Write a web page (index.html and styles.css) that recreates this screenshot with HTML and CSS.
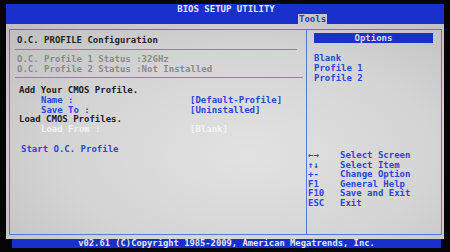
FILE: index.html
```html
<!DOCTYPE html>
<html lang="en">
<head>
    <meta charset="UTF-8">
    <meta name="viewport" content="width=device-width, initial-scale=1.0">
    <title>BIOS Setup Utility</title>
    <link rel="stylesheet" href="styles.css">
</head>
<body>
    <div class="screen">
        <div class="topbar">
            <div class="bar-title">BIOS SETUP UTILITY</div>
            <div class="tabs"><span class="tab active">Tools</span></div>
        </div>
        <div class="main">
            <div class="frame">
                <div class="left">
                    <div class="heading">O.C. PROFILE Configuration</div>
                    <div class="rule short"></div>
                    <div class="status">
                        <div class="row">O.C. Profile 1 Status :32GHz</div>
                        <div class="row">O.C. Profile 2 Status :Not Installed</div>
                    </div>
                    <div class="rule long"></div>
                    <div class="items">
                        <div class="row dark">Add Your CMOS Profile.</div>
                        <div class="row field"><span class="label">Name :</span><span>[Default-Profile]</span></div>
                        <div class="row field"><span class="label">Save To :</span><span>[Uninstalled]</span></div>
                        <div class="row dark">Load CMOS Profiles.</div>
                        <div class="row field disabled"><span class="label">Load From :</span><span>[Blank]</span></div>
                        <div class="row"></div>
                        <div class="row link">Start O.C. Profile</div>
                    </div>
                </div>
                <div class="right">
                    <div class="options-head">Options</div>
                    <div class="options">
                        <div class="row">Blank</div>
                        <div class="row">Profile 1</div>
                        <div class="row">Profile 2</div>
                    </div>
                    <div class="help">
                        <div class="row"><span class="key">&larr;&rarr;</span>Select Screen</div>
                        <div class="row"><span class="key">&uarr;&darr;</span>Select Item</div>
                        <div class="row"><span class="key">+-</span>Change Option</div>
                        <div class="row"><span class="key">F1</span>General Help</div>
                        <div class="row"><span class="key">F10</span>Save and Exit</div>
                        <div class="row"><span class="key">ESC</span>Exit</div>
                    </div>
                </div>
            </div>
        </div>
        <div class="footer">v02.61 (C)Copyright 1985-2009, American Megatrends, Inc.</div>
    </div>
</body>
</html>
```
FILE: styles.css
```css
body {
    margin: 0;
    background: #050505;
    font-family: 'DejaVu Sans Mono', 'Liberation Mono', monospace;
    font-size: 9px;
    font-weight: bold;
    overflow: hidden;
}
.screen {
    width: 438px;
    height: 244px;
    margin: 4px 0 0 6px;
    display: flex;
    flex-direction: column;
}
.topbar {
    height: 20px;
    background: #1a30cc;
    color: #e4e6f0;
}
.bar-title {
    height: 10px;
    line-height: 10px;
    text-align: center;
    padding-left: 2px;
}
.tabs {
    height: 10px;
    padding-left: 292px;
}
.tab {
    display: inline-block;
    height: 10px;
    line-height: 11px;
    padding: 0 1px;
    background: #c8c8c8;
    color: #2440cc;
}
.main {
    flex: 1;
    padding: 5px 2px 4px 3px;
    background: radial-gradient(ellipse at 55% 60%, #e2e2e2 0%, #d4d4d4 55%, #bdbdbd 100%);
}
.frame {
    height: 100%;
    box-sizing: border-box;
    border: 1px solid #5b74e0;
    display: flex;
}
.row {
    height: 9.7px;
    line-height: 10px;
    white-space: pre;
}
.left {
    width: 296px;
    border-right: 1px solid #5b74e0;
    padding-top: 5px;
    color: #2a46d6;
}
.heading {
    height: 11px;
    line-height: 11px;
    padding-left: 7px;
    color: #262626;
}
.rule {
    border-top: 1px solid #6e86e4;
    margin-left: 5px;
}
.rule.short {
    width: 282px;
    margin-top: 3px;
}
.rule.long {
    width: 288px;
    margin-top: 4px;
}
.status {
    margin-top: 4px;
    padding-left: 7px;
    color: #8a8a8a;
}
.items {
    margin-top: 7px;
    padding-left: 9px;
}
.dark {
    color: #222;
}
.field {
    display: flex;
}
.label {
    width: 171px;
    padding-left: 22px;
    box-sizing: border-box;
}
.disabled {
    color: #f4f4f4;
}
.link {
    padding-left: 2px;
}
.right {
    flex: 1;
    display: flex;
    flex-direction: column;
    color: #2a46d6;
}
.options-head {
    height: 10px;
    line-height: 10px;
    margin: 3px 8px 0 7px;
    background: #1a30cc;
    color: #d8dbe8;
    text-align: center;
}
.options {
    margin-top: 10px;
    padding-left: 7px;
}
.options .row {
    height: 10px;
}
.help {
    margin-top: auto;
    margin-bottom: 27px;
    padding-left: 1px;
}
.help .row {
    height: 9.5px;
}
.key {
    display: inline-block;
    width: 32px;
}
.footer {
    height: 9px;
    line-height: 9px;
    background: #1a30cc;
    color: #e4e6f0;
    text-align: center;
    font-size: 8.8px;
    margin: 0 3px 0 6px;
}
```
